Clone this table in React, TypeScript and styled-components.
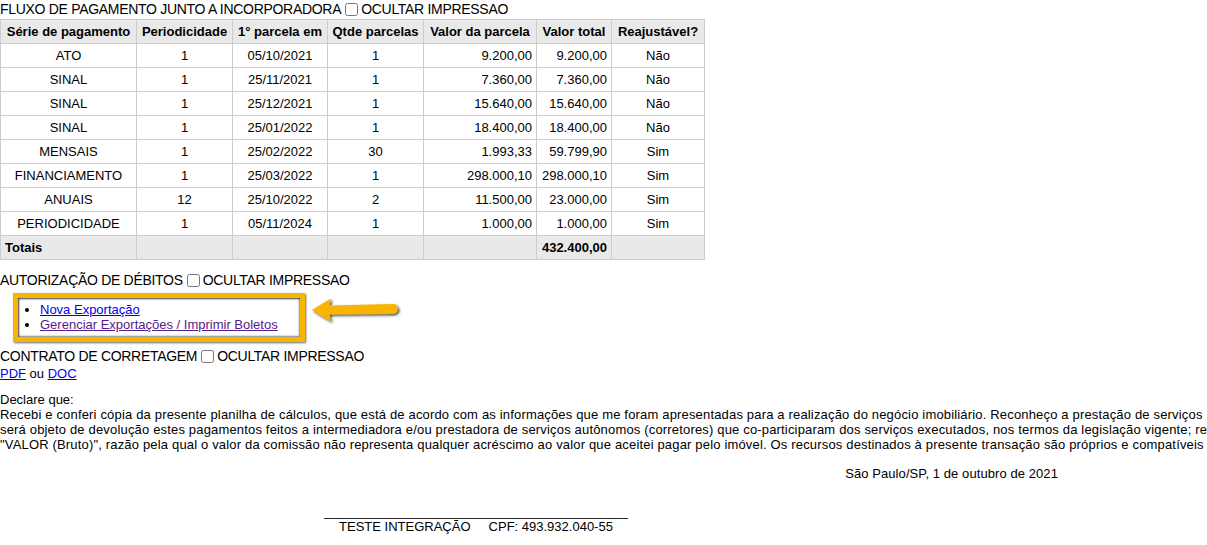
import React from "react";
import styled, { createGlobalStyle } from "styled-components";

type Parcela = {
  serie: string;
  periodicidade: string;
  primeira: string;
  qtde: string;
  valorParcela: string;
  valorTotal: string;
  reajustavel: string;
};

const parcelas: Parcela[] = [
  { serie: "ATO", periodicidade: "1", primeira: "05/10/2021", qtde: "1", valorParcela: "9.200,00", valorTotal: "9.200,00", reajustavel: "Não" },
  { serie: "SINAL", periodicidade: "1", primeira: "25/11/2021", qtde: "1", valorParcela: "7.360,00", valorTotal: "7.360,00", reajustavel: "Não" },
  { serie: "SINAL", periodicidade: "1", primeira: "25/12/2021", qtde: "1", valorParcela: "15.640,00", valorTotal: "15.640,00", reajustavel: "Não" },
  { serie: "SINAL", periodicidade: "1", primeira: "25/01/2022", qtde: "1", valorParcela: "18.400,00", valorTotal: "18.400,00", reajustavel: "Não" },
  { serie: "MENSAIS", periodicidade: "1", primeira: "25/02/2022", qtde: "30", valorParcela: "1.993,33", valorTotal: "59.799,90", reajustavel: "Sim" },
  { serie: "FINANCIAMENTO", periodicidade: "1", primeira: "25/03/2022", qtde: "1", valorParcela: "298.000,10", valorTotal: "298.000,10", reajustavel: "Sim" },
  { serie: "ANUAIS", periodicidade: "12", primeira: "25/10/2022", qtde: "2", valorParcela: "11.500,00", valorTotal: "23.000,00", reajustavel: "Sim" },
  { serie: "PERIODICIDADE", periodicidade: "1", primeira: "05/11/2024", qtde: "1", valorParcela: "1.000,00", valorTotal: "1.000,00", reajustavel: "Sim" },
];

// larguras das colunas da tabela
const colunas = [136, 96, 95, 96, 113, 75, 93];

const GlobalStyle = createGlobalStyle`
  html, body {
    margin: 0;
    padding: 0;
    background: #fff;
    overflow: hidden;
  }
  body {
    font-family: "Liberation Sans", Arial, sans-serif;
    font-size: 13px;
    line-height: 15px;
    color: #000;
  }
  a { color: #0000ee; }
  a.visited { color: #551a8b; }
`;

const Section = ({ title }: { title: string }) => (
  <SectionTitle>
    {title}
    <HideCheck type="checkbox" />
    OCULTAR IMPRESSAO
  </SectionTitle>
);

export default function App() {
  return (
    <Page>
      <GlobalStyle />
      <Section title="FLUXO DE PAGAMENTO JUNTO A INCORPORADORA" />
      <FlowTable>
        <colgroup>
          {colunas.map((w, i) => (
            <Col key={i} $width={w} />
          ))}
        </colgroup>
        <thead>
          <tr>
            <Th>Série de pagamento</Th>
            <Th>Periodicidade</Th>
            <Th>1° parcela em</Th>
            <Th>Qtde parcelas</Th>
            <Th>Valor da parcela</Th>
            <Th>Valor total</Th>
            <Th>Reajustável?</Th>
          </tr>
        </thead>
        <tbody>
          {parcelas.map((p, i) => (
            <tr key={i}>
              <Td>{p.serie}</Td>
              <Td>{p.periodicidade}</Td>
              <Td>{p.primeira}</Td>
              <Td>{p.qtde}</Td>
              <Td $align="right">{p.valorParcela}</Td>
              <Td $align="right">{p.valorTotal}</Td>
              <Td>{p.reajustavel}</Td>
            </tr>
          ))}
          <tr>
            <TotalCell $align="left">Totais</TotalCell>
            <TotalCell />
            <TotalCell />
            <TotalCell />
            <TotalCell />
            <TotalCell $align="right">432.400,00</TotalCell>
            <TotalCell />
          </tr>
        </tbody>
      </FlowTable>

      <DebitBlock>
        <Section title="AUTORIZAÇÃO DE DÉBITOS" />
        <LinkList>
          <li>
            <a href="#">Nova Exportação</a>
          </li>
          <li>
            <a href="#" className="visited">
              Gerenciar Exportações / Imprimir Boletos
            </a>
          </li>
        </LinkList>
        <Arrow width="100" height="36" viewBox="0 0 100 36">
          <defs>
            <filter id="sombra" x="-10%" y="-30%" width="130%" height="170%">
              <feDropShadow dx="1.5" dy="1.5" stdDeviation="1" floodColor="#222" floodOpacity="0.8" />
            </filter>
          </defs>
          <path
            d="M7 17 Q16 11 26 5.5 L24.5 12.5 L88 11 A5 5 0 0 1 88 21 L24.5 21.5 L26 28.5 Q16 23 7 17 Z"
            fill="#f7b500"
            filter="url(#sombra)"
          />
        </Arrow>
      </DebitBlock>

      <ContractTitle>
        <Section title="CONTRATO DE CORRETAGEM" />
      </ContractTitle>
      <Line>
        <a href="#">PDF</a> ou <a href="#">DOC</a>
      </Line>

      <Declaration>
        <Line>Declare que:</Line>
        <TextLine>
          Recebi e conferi cópia da presente planilha de cálculos, que está de acordo com as informações que me foram
          apresentadas para a realização do negócio imobiliário. Reconheço a prestação de serviços
        </TextLine>
        <TextLine>
          será objeto de devolução estes pagamentos feitos a intermediadora e/ou prestadora de serviços autônomos
          (corretores) que co-participaram dos serviços executados, nos termos da legislação vigente; reconheço
        </TextLine>
        <TextLine>
          "VALOR (Bruto)", razão pela qual o valor da comissão não representa qualquer acréscimo ao valor que aceitei pagar
          pelo imóvel. Os recursos destinados à presente transação são próprios e compatíveis com
        </TextLine>
      </Declaration>

      <DateLine>São Paulo/SP, 1 de outubro de 2021</DateLine>

      <Signature>
        <Line>{"_".repeat(42)}</Line>
        <Line>TESTE INTEGRAÇÃO&nbsp;&nbsp;&nbsp;&nbsp; CPF: 493.932.040-55</Line>
      </Signature>
    </Page>
  );
}

const Page = styled.div`
  width: 1207px;
  overflow: hidden;
`;

const SectionTitle = styled.div`
  display: flex;
  align-items: center;
  height: 19px;
  font-size: 14px;
  letter-spacing: -0.3px;
  white-space: nowrap;
`;

const HideCheck = styled.input`
  width: 13px;
  height: 13px;
  margin: 0 3px 0 4px;
`;

const FlowTable = styled.table`
  border-collapse: collapse;
  table-layout: fixed;
  width: 704px;
  border: 1px solid #cccccc;
`;

const Col = styled.col<{ $width: number }>`
  width: ${(p) => p.$width}px;
`;

const Th = styled.th`
  background: #e9e9e9;
  border: 1px solid #cccccc;
  padding: 4px 4px;
  font-weight: bold;
  text-align: center;
  white-space: nowrap;
`;

const Td = styled.td<{ $align?: "left" | "right" | "center" }>`
  border: 1px solid #cccccc;
  padding: 4px 4px;
  text-align: ${(p) => p.$align ?? "center"};
  white-space: nowrap;
`;

const TotalCell = styled(Td)`
  background: #e9e9e9;
  font-weight: bold;
`;

const DebitBlock = styled.div`
  position: relative;
  margin-top: 11px;
`;

const LinkList = styled.ul`
  box-sizing: border-box;
  width: 292px;
  margin: 3px 0 0 13px;
  padding: 4px 0 5px 22px;
  border: 5px solid #f7b500;
  box-shadow: inset 1px 1px 2px rgba(0, 0, 0, 0.75), inset -1px -1px 2px rgba(0, 0, 0, 0.45),
    1px 1px 2px rgba(0, 0, 0, 0.6);
  list-style: disc;
  white-space: nowrap;
`;

const Arrow = styled.svg`
  position: absolute;
  left: 305px;
  top: 22px;
`;

const ContractTitle = styled.div`
  margin-top: 5px;
`;

const Line = styled.div`
  white-space: nowrap;
`;

const TextLine = styled(Line)`
  letter-spacing: 0.17px;
`;

const Declaration = styled.div`
  margin-top: 11px;
`;

const DateLine = styled.div`
  width: 1058px;
  margin-top: 14px;
  text-align: right;
  letter-spacing: 0.08px;
`;

const Signature = styled.div`
  width: 400px;
  margin: 23px 0 0 276px;
  text-align: center;
`;
